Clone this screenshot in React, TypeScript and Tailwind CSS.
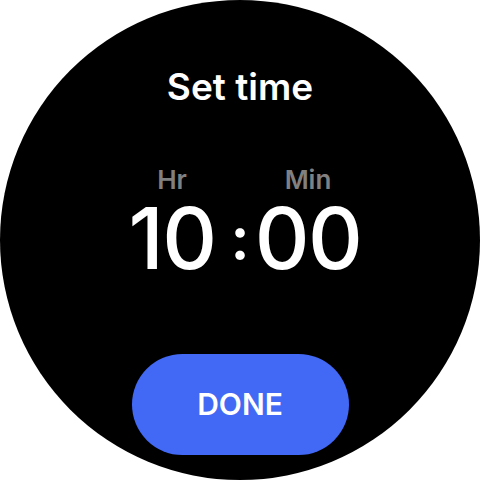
export default function App() {
  const font = { fontFamily: "Inter, 'Noto Sans', sans-serif" };

  return (
    <div className="w-[480px] h-[480px] bg-white" style={font}>
      <div className="w-full h-full rounded-full bg-black flex flex-col items-center pt-[68px] text-white">
        <h1 className="text-[37px] leading-[37px] font-semibold">Set time</h1>

        <div className="mt-[62px] flex items-start">
          <div className="w-[104px] flex flex-col items-center">
            <span className="text-[26px] leading-[26px] font-semibold text-[#808080]">Hr</span>
            <span className="mt-[4px] text-[85px] leading-[84px] font-medium tracking-[-1.5px]">10</span>
          </div>
          <div className="w-[32px] flex justify-center pt-[28px]">
            <span className="text-[60px] leading-[84px] font-semibold">:</span>
          </div>
          <div className="w-[104px] flex flex-col items-center">
            <span className="text-[26px] leading-[26px] font-semibold text-[#808080]">Min</span>
            <span className="mt-[4px] text-[85px] leading-[84px] font-medium tracking-[-1.5px]">00</span>
          </div>
        </div>

        <button className="mt-[73px] w-[217px] h-[101px] rounded-full bg-[#4169f6] text-[30px] font-semibold text-white">
          DONE
        </button>
      </div>
    </div>
  );
}
